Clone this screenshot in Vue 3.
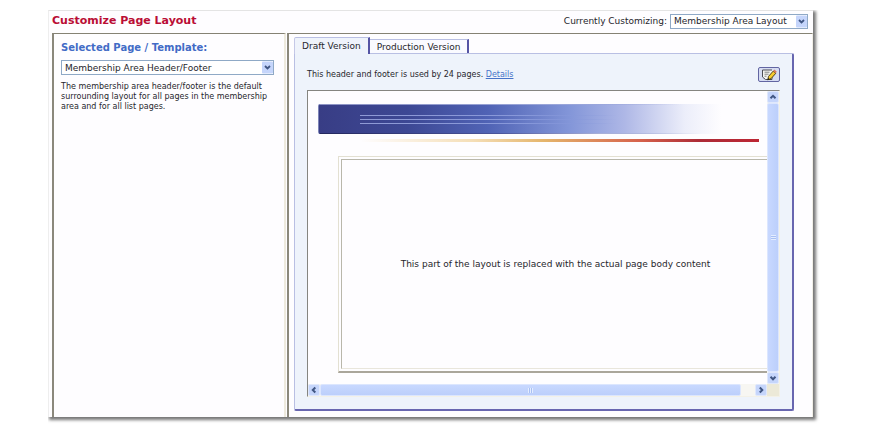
<script setup>
import { ref } from 'vue'

const layout = ref('Membership Area Layout')
const template = ref('Membership Area Header/Footer')
const activeTab = ref('draft')
</script>

<template>
  <main class="window">
    <header class="titlebar">
      <h1>Customize Page Layout</h1>
      <div class="customizing">
        <label for="layout">Currently Customizing:</label>
        <span class="select layout-select">
          <select id="layout" v-model="layout">
            <option>Membership Area Layout</option>
          </select>
          <svg class="arrow" viewBox="0 0 11 12" aria-hidden="true">
            <rect width="11" height="12" rx="1" fill="#c5d5fb" />
            <path d="M3 4.5 5.5 7 8 4.5" fill="none" stroke="#405683" stroke-width="1.8" />
          </svg>
        </span>
      </div>
    </header>

    <div class="frames">
      <section class="frame sidebar">
        <label class="heading" for="template">Selected Page / Template:</label>
        <span class="select">
          <select id="template" v-model="template">
            <option>Membership Area Header/Footer</option>
          </select>
          <svg class="arrow" viewBox="0 0 11 12" aria-hidden="true">
            <rect width="11" height="12" rx="1" fill="#c5d5fb" />
            <path d="M3 4.5 5.5 7 8 4.5" fill="none" stroke="#405683" stroke-width="1.8" />
          </svg>
        </span>
        <p>The membership area header/footer is the default surrounding layout for all pages in the membership area and for all list pages.</p>
      </section>

      <section class="frame content">
        <div class="tabs" role="tablist">
          <button role="tab" class="tab" :class="{ active: activeTab === 'draft' }" :aria-selected="activeTab === 'draft'" @click="activeTab = 'draft'">Draft Version</button>
          <button role="tab" class="tab" :class="{ active: activeTab === 'production' }" :aria-selected="activeTab === 'production'" @click="activeTab = 'production'">Production Version</button>
        </div>
        <div class="panel">
          <div class="usage">
            <span>This header and footer is used by 24 pages. <a href="#details">Details</a></span>
            <button class="edit" aria-label="Edit">
              <svg viewBox="0 0 16 12" aria-hidden="true">
                <path d="M1.5 1h10v9.5h-7l-3-2.5z" fill="#f4f4f2" />
                <path d="M11 1H1.5v7l3 2.5H11V8" fill="none" stroke="#4c4d55" />
                <path d="M3.5 3.2h5M3.5 5.2h4M3.5 7.2h2" stroke="#777" stroke-width=".9" />
                <path d="M6.8 10.8 7.5 7.4l4.7-5.3 2.6 2.2-4.8 5.4z" fill="#f7cb2e" stroke="#3e330f" stroke-width=".9" />
                <path d="m12.2 2.1 1.2-1.5L15.8 2.700l-1.200 1.500z" fill="#d9785a" />
                <path d="m6.400 11.300.8-2.300 1.500 1.200z" fill="#222" />
              </svg>
            </button>
          </div>

          <div class="preview">
            <div class="page">
              <div class="banner"><div class="stripes"><i></i><i></i><i></i></div></div>
              <div class="rule"></div>
              <div class="body-slot"><div>This part of the layout is replaced with the actual page body content</div></div>
            </div>
            <div class="scroll vertical">
              <button aria-label="Scroll up"><svg viewBox="0 0 10 10"><path d="M2.5 6.3 5 3.8l2.5 2.5" /></svg></button>
              <div class="thumb"><span class="grip"></span></div>
              <button aria-label="Scroll down"><svg viewBox="0 0 10 10"><path d="M2.5 3.8 5 6.3l2.5-2.5" /></svg></button>
            </div>
            <div class="scroll horizontal">
              <button aria-label="Scroll left"><svg viewBox="0 0 10 10"><path d="M6.3 2.5 3.8 5l2.5 2.5" /></svg></button>
              <div class="thumb"><span class="grip"></span></div>
              <div class="track"></div>
              <button aria-label="Scroll right"><svg viewBox="0 0 10 10"><path d="M3.8 2.5 6.3 5 3.8 7.5" /></svg></button>
            </div>
            <div class="corner"></div>
          </div>
        </div>
      </section>
    </div>
  </main>
</template>

<style>
body {
  margin: 0;
  background: #fff;
}
#app {
  display: flex;
  min-height: 100vh;
}
</style>

<style scoped>
* {
  box-sizing: border-box;
}
.window {
  flex: 1;
  display: flex;
  flex-direction: column;
  margin: 10px 56px 20px 48px;
  padding-left: 3px;
  background: #fefdff;
  border-top: 1px solid #e4e4e4;
  border-left: 1px solid #eee;
  box-shadow: 2px 2px 3px 1px #777;
  clip-path: inset(0 -8px -8px 0);
  font-family: Verdana, "DejaVu Sans", sans-serif;
  font-size: 9px;
  color: #26262c;
}
.titlebar {
  display: flex;
  justify-content: space-between;
  height: 22px;
  padding-right: 5px;
}
h1 {
  margin: 0;
  font-size: 11px;
  line-height: 20px;
  color: #ba0d35;
}
.customizing {
  display: flex;
  align-items: center;
  gap: 3px;
  height: 20px;
}
.select {
  position: relative;
  display: block;
}
.layout-select {
  width: 138px;
}
select {
  appearance: none;
  display: block;
  width: 100%;
  height: 15px;
  padding: 0 13px 0 3px;
  border: 1px solid #8fa9c6;
  border-radius: 0;
  background: #fff;
  font: inherit;
  color: inherit;
}
.arrow {
  position: absolute;
  top: 1px;
  right: 1px;
  width: 11px;
  height: 13px;
  pointer-events: none;
}
.frames {
  flex: 1;
  display: grid;
  grid-template-columns: 235px 1fr;
}
.frame {
  border-top: 1px solid #858274;
  border-left: 2px solid #8b887c;
}
.sidebar {
  margin-right: 1px;
  padding: 7px 10px 0 7px;
  border-right: 2px solid #eeeade;
}
.heading {
  display: block;
  margin-bottom: 5px;
  font-size: 10px;
  line-height: 14px;
  font-weight: bold;
  color: #426bc6;
}
.sidebar p {
  margin: 7px -4px 0 0;
  font-size: 8px;
  line-height: 10px;
}
.content {
  display: flex;
  flex-direction: column;
  padding: 3px 18px 6px 5px;
  border-right: 1px solid #f1efe7;
}
.tabs {
  display: flex;
  align-items: flex-end;
  height: 16px;
}
.tab {
  height: 14px;
  padding: 0 7px;
  border: 1px solid #b9bfe3;
  border-right: 2px solid #5554a4;
  border-bottom: 0;
  border-left: 0;
  background: #fafaff;
  font: inherit;
  color: inherit;
  white-space: nowrap;
}
.tab.active {
  z-index: 1;
  height: 17px;
  margin-bottom: -1px;
  border-left: 1px solid #c5c8e7;
  border-radius: 2px 0 0;
  background: #eff3fb;
}
.panel {
  flex: 1;
  display: flex;
  flex-direction: column;
  padding: 13px 12px 12px;
  border: 1px solid #b9bfe3;
  border-right: 2px solid #6866b0;
  border-bottom: 2px solid #6866b0;
  border-radius: 0 2px 2px;
  background: #eef3fb;
}
.usage {
  display: flex;
  align-items: center;
  justify-content: space-between;
  height: 15px;
  margin-bottom: 8px;
  font-size: 8px;
}
.usage a {
  color: #4773c9;
}
.edit {
  display: grid;
  place-items: center;
  width: 22px;
  height: 15px;
  padding: 0;
  border: 1px solid #6265a2;
  border-radius: 2px;
  background: #d6dcf2;
}
.edit svg {
  width: 16px;
  height: 12px;
}
.preview {
  flex: 1;
  display: grid;
  grid-template: minmax(260px, 1fr) 12px / 1fr 12px;
  border: 1px solid #f3f1e8;
  border-top: 1px solid #858580;
  border-left: 1px solid #858580;
  background: #fefdff;
}
.page {
  display: flex;
  flex-direction: column;
  overflow: hidden;
  padding: 13px 0 11px 10px;
}
.banner {
  height: 30px;
  margin-right: 46px;
  padding: 11px 104px 0 41px;
  border-left: 1px solid #7d84b8;
  border-radius: 2px 0 0 2px;
  background:
    linear-gradient(90deg, #8d93c4, #9aa6da 60%, transparent 90%) top / 100% 1px no-repeat,
    linear-gradient(90deg, #23265c, #4a559c 45%, #a9b0d8 70%, transparent 95%) bottom / 100% 1px no-repeat,
    linear-gradient(90deg, #383d85, #3d4894 22%, #5063b5 42%, #8295d8 62%, #aeb7e6 76%, #eceefa 91%, #fefdff);
}
.stripes {
  display: grid;
  gap: 3px;
}
.stripes i {
  height: 1px;
  background: linear-gradient(90deg, #8f9ad5, #8798da 65%, transparent);
}
.rule {
  height: 3px;
  margin: 5px 8px 14px 42px;
  flex: none;
  background: linear-gradient(90deg, #fefdff, #f5dfb8 28%, #e5b56c 46%, #d6624c 70%, #ad2b37 85%, #bd2634);
}
.body-slot {
  flex: 1;
  display: flex;
  margin: 0 -6px 0 20px;
  padding: 2px;
  border: 1px solid #e3e0d2;
  border-bottom: 2px solid #aaa69b;
}
.body-slot div {
  flex: 1;
  display: grid;
  place-items: center;
  border: 1px solid #b9b7ab;
  border-bottom-color: #e9e6dc;
}
.scroll {
  display: flex;
  background: #f7f6f2;
}
.vertical {
  flex-direction: column;
}
.scroll button {
  flex: none;
  width: 12px;
  height: 12px;
  padding: 0;
  border: 1px solid #e0e8fc;
  border-radius: 2px;
  background: #c5d5fb;
}
.scroll svg {
  display: block;
  width: 10px;
  height: 10px;
  fill: none;
  stroke: #405683;
  stroke-width: 2;
}
.thumb {
  flex: 1;
  display: grid;
  place-items: center;
  border: 1px solid #dce6fe;
  border-radius: 2px;
  background: linear-gradient(90deg, #c8d8ff, #bccffb);
}
.horizontal .thumb {
  background: linear-gradient(#c8d8ff, #bccffb);
}
.grip {
  width: 5px;
  height: 5px;
  background: repeating-linear-gradient(#e4edff 0 1px, #a9c0f3 1px 2px);
}
.horizontal .grip {
  background: repeating-linear-gradient(90deg, #e4edff 0 1px, #a9c0f3 1px 2px);
}
.track {
  width: 14px;
}
.corner {
  background: #ece9d8;
}
</style>
